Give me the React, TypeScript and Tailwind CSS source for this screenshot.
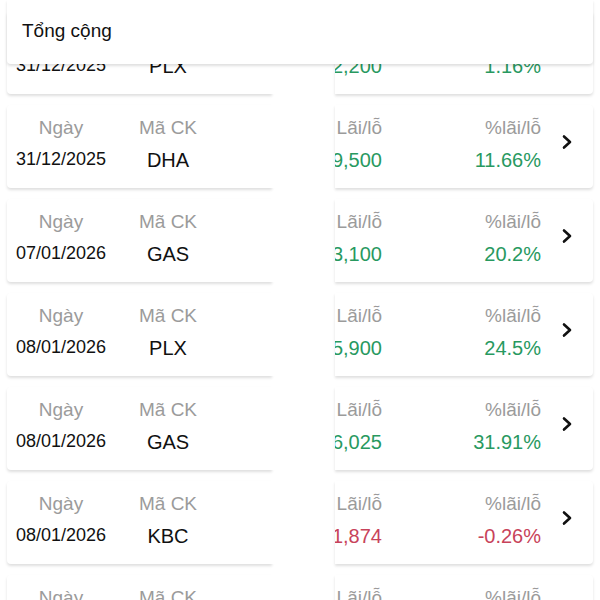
interface Trade {
  date: string;
  code: string;
  pnl: string;
  pct: string;
  up: boolean;
}

const trades: Trade[] = [
  { date: "31/12/2025", code: "PLX", pnl: "1,062,200", pct: "1.16%", up: true },
  { date: "31/12/2025", code: "DHA", pnl: "4,319,500", pct: "11.66%", up: true },
  { date: "07/01/2026", code: "GAS", pnl: "7,583,100", pct: "20.2%", up: true },
  { date: "08/01/2026", code: "PLX", pnl: "8,825,900", pct: "24.5%", up: true },
  { date: "08/01/2026", code: "GAS", pnl: "9,736,025", pct: "31.91%", up: true },
  { date: "08/01/2026", code: "KBC", pnl: "-81,874", pct: "-0.26%", up: false },
  { date: "09/01/2026", code: "HPG", pnl: "2,410,000", pct: "5.12%", up: true },
];

const font = { fontFamily: "Arial, 'Liberation Sans', sans-serif" };

const Chevron = () => (
  <svg width="12" height="16" viewBox="0 0 12 16" className="shrink-0">
    <path
      d="M3 2.5 L9 8 L3 13.5"
      fill="none"
      stroke="#111"
      strokeWidth="2.6"
      strokeLinecap="round"
      strokeLinejoin="round"
    />
  </svg>
);

const TradeRow = ({ trade }: { trade: Trade }) => {
  const color = trade.up ? "text-[#28995f]" : "text-[#c8435a]";
  return (
    <div className="flex h-[83px] shrink-0">
      <div className="flex w-[265px] shrink-0 items-stretch rounded-l-[4px] bg-white pl-[4px] shadow-[0_2px_3px_rgba(0,0,0,0.13)]">
        <div className="flex w-[100px] flex-col items-center pt-[10px]">
          <span className="text-[19px] leading-[26px] text-[#9b9b9b]">Ngày</span>
          <span className="mt-[6px] text-[18px] leading-[24px] text-[#111]">{trade.date}</span>
        </div>
        <div className="flex w-[114px] flex-col items-center pt-[10px]">
          <span className="text-[19px] leading-[26px] text-[#9b9b9b]">Mã CK</span>
          <span className="mt-[6px] text-[20px] leading-[26px] text-[#111]">{trade.code}</span>
        </div>
      </div>
      <div className="w-[63px] shrink-0 bg-white" />
      <div className="flex w-[258px] shrink-0 items-center overflow-hidden rounded-r-[4px] bg-white shadow-[0_2px_3px_rgba(0,0,0,0.13)]">
        <div className="flex w-[47px] shrink-0 flex-col items-end self-stretch pt-[10px]">
          <span className="whitespace-nowrap text-[19px] leading-[26px] text-[#9b9b9b]">Lãi/lỗ</span>
          <span className={`mt-[6px] whitespace-nowrap text-[20px] leading-[26px] ${color}`}>
            {trade.pnl}
          </span>
        </div>
        <div className="flex flex-1 flex-col items-end self-stretch pr-[2px] pt-[10px]">
          <span className="whitespace-nowrap text-[19px] leading-[26px] text-[#9b9b9b]">%lãi/lỗ</span>
          <span className={`mt-[6px] whitespace-nowrap text-[20px] leading-[26px] ${color}`}>
            {trade.pct}
          </span>
        </div>
        <div className="flex w-[50px] shrink-0 justify-center pb-[10px] pr-[2px]">
          <Chevron />
        </div>
      </div>
    </div>
  );
};

const App = () => {
  return (
    <div className="relative h-[600px] w-[600px] overflow-hidden bg-white" style={font}>
      <div className="absolute left-[7px] right-[7px] top-0 z-10 flex h-[64px] items-center rounded-b-[4px] bg-white pb-[2px] pl-[15px] shadow-[0_2px_3px_rgba(0,0,0,0.13)]">
        <span className="text-[19px] text-[#111]">Tổng cộng</span>
      </div>
      <div className="flex flex-col gap-[11px] px-[7px] pt-[11px]">
        {trades.map((t, i) => (
          <TradeRow key={i} trade={t} />
        ))}
      </div>
    </div>
  );
};

export default App;
